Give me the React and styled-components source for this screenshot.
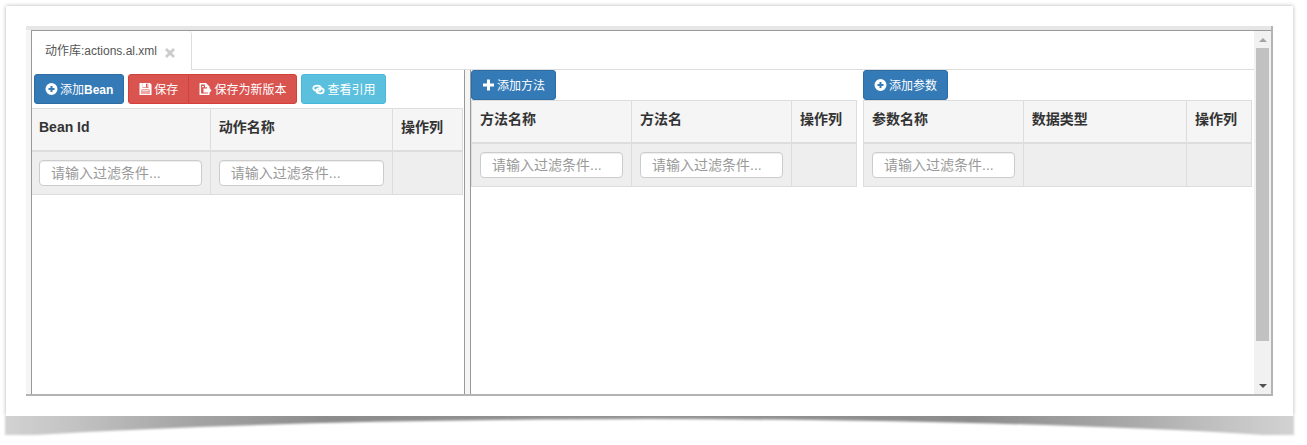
import React from 'react'
import styled, { createGlobalStyle } from 'styled-components'

const GlobalStyle = createGlobalStyle`
  *{
    box-sizing:border-box;
  }
  body{
    margin:0;
    background:#fff;
    color:#333;
    font-family:"Liberation Sans", Arial, "Noto Sans CJK SC", sans-serif;
    font-size:14px;
    line-height:20px;
  }
`
const Page = styled.div`
  display:flex;
  flex-direction:column;
  min-height:100vh;
  padding:6px 14px 5px 6px;
`
const Sheet = styled.main`
  flex:1;
  display:flex;
  padding:20px;
  background:#fff;
  box-shadow:0 0 4px rgba(0,0,0,0.3);
  clip-path:inset(-6px -6px 0 -6px);
`
const Curl = styled.svg`
  display:block;
  width:100%;
  height:24px;
  overflow:visible;
`
const Editor = styled.div`
  flex:1;
  display:flex;
  min-width:0;
  border:2px groove #ccc;
  border-color:#b4b4b4;
  border-style:solid;
  border-width:0 2px 2px 0;
  background:#f5f5f5;
  padding:4px 0 0 5px;
  box-shadow:inset 0 4px #e6e6e6;
`
const Workspace = styled.div`
  flex:1;
  display:flex;
  flex-direction:column;
  min-width:0;
  background:#fff;
  border:solid #999;
  border-width:1px 0 0 1px;
`
const Tabs = styled.div`
  display:flex;
  height:39px;
  border-bottom:1px solid #ddd;
`
const Tab = styled.div`
  display:flex;
  align-items:center;
  gap:8px;
  height:39px;
  padding:0 16px 0 13px;
  background:#fff;
  border-right:1px solid #ddd;
  border-radius:0 4px 0 0;
  color:#555;
  font-size:12px;
`
const TabLink = styled.a`
  color:#555;
  text-decoration:none;
`
const CloseButton = styled.button`
  display:flex;
  margin-top:4px;
  padding:0;
  border:none;
  background:none;
  color:#ccc;
`
const Panes = styled.div`
  flex:1;
  display:grid;
  grid-template-columns:432fr 7px 783fr;
`
const BeanPane = styled.section`
  padding:4px 1px 0 0;
`
const Splitter = styled.div`
  background:#f5f5f5;
  border:solid #999;
  border-width:0 1px;
`
const DetailPane = styled.div`
  display:grid;
  grid-template-columns:386fr 389fr;
  gap:6px;
  align-items:start;
  padding-right:2px;
`
const Toolbar = styled.div`
  display:flex;
  gap:4px;
  padding:${({ $inset }) => $inset ? '0 2px 4px' : '0'};
`
const ButtonGroup = styled.div`
  display:flex;
  button:first-child{
    border-radius:3px 0 0 3px;
  }
  button:last-child{
    border-radius:0 3px 3px 0;
    margin-left:-1px;
  }
`
const colors = {
  primary: ['#337ab7', '#2e6da4'],
  danger: ['#d9534f', '#d43f3a'],
  info: ['#5bc0de', '#46b8da'],
}
const Button = styled.button`
  display:flex;
  align-items:center;
  gap:2px;
  height:30px;
  padding:1px 10px 0;
  border:1px solid ${({ $kind }) => colors[$kind][1]};
  border-radius:3px;
  background:${({ $kind }) => colors[$kind][0]};
  color:#fff;
  font-family:inherit;
  font-size:12px;
  line-height:18px;
  white-space:nowrap;
  b{
    margin-left:-2px;
  }
`
const Icon = styled.svg`
  display:block;
  flex:none;
  width:13px;
  height:12px;
  margin-bottom:2px;
  fill:currentColor;
`
const Table = styled.table`
  width:100%;
  table-layout:fixed;
  border-collapse:separate;
  border-spacing:0;
  border-left:${({ $flush }) => $flush ? 'none' : '1px solid #ddd'};
  th, td{
    border-right:1px solid #ddd;
    text-align:left;
    vertical-align:top;
  }
  th{
    padding:8px 8px 13px;
    background:#f5f5f5;
    border-top:1px solid #ddd;
    border-bottom:2px solid #ddd;
    font-weight:bold;
  }
  td{
    height:43px;
    padding:8px;
    background:#eee;
    border-bottom:1px solid #ddd;
  }
  th:first-child, td:first-child{
    padding-left:${({ $flush }) => $flush ? '7px' : '8px'};
  }
`
const Filter = styled.input`
  display:block;
  width:100%;
  height:26px;
  padding:0 11px;
  border:1px solid #ccc;
  border-radius:4px;
  background:#fff;
  box-shadow:inset 0 1px 1px rgba(0,0,0,0.075);
  color:#555;
  font-family:inherit;
  font-size:14px;
  &::placeholder{
    color:#999;
    opacity:1;
  }
`
const Scrollbar = styled.div`
  display:flex;
  flex-direction:column;
  width:17px;
  padding:0 2px;
  background:#f1f1f1;
  border-top:1px solid #999;
`
const Arrow = styled.button`
  display:flex;
  align-items:center;
  justify-content:center;
  height:17px;
  padding:0;
  border:none;
  background:none;
  color:${({ $muted }) => $muted ? '#a3a3a3' : '#505050'};
`
const Track = styled.div`
  flex:1;
`
const Thumb = styled.div`
  height:89%;
  background:#c1c1c1;
`

const PlusSign = () => (
  <Icon viewBox="0 0 12 12" aria-hidden="true">
    <path fillRule="evenodd" d="M6 0a6 6 0 1 0 0 12A6 6 0 0 0 6 0zM5 3h2v2h2v2H7v2H5V7H3V5h2z" />
  </Icon>
)
const Plus = () => (
  <Icon viewBox="0 0 12 12" aria-hidden="true">
    <path d="M4.5.5h3v4h4v3h-4v4h-3v-4h-4v-3h4z" />
  </Icon>
)
const Floppy = () => (
  <Icon viewBox="0 0 12 12" aria-hidden="true">
    <path fillRule="evenodd" d="M0 0h10.5L12 1.5V12H0zM3 .8v4h6v-4zM2 6.5V11h8V6.5z" />
    <path d="M3 0h3.5v4.2H3zM8 1h1v3H8zM2.6 7.2h6.8v1.2H2.6zM2.6 9.4h6.8v1.2H2.6z" />
  </Icon>
)
const SaveAs = () => (
  <Icon viewBox="0 0 12 12" aria-hidden="true">
    <path fillRule="evenodd" d="M0 0h6.5L10 3.5V5l2 2.5-2 2.3V12H0zM1.6 1.4v9.2h6.8V9.4H4V5.6h3.6V4.2H5.4V1.4z" />
    <path d="M2.6 3h1.6v1.2H2.6zM4.8 6.4h3.4v2.2H4.8z" />
  </Icon>
)
const LinkIcon = () => (
  <Icon viewBox="0 0 12 12" aria-hidden="true">
    <g fill="none" stroke="currentColor" strokeWidth="1.8">
      <ellipse cx="4.6" cy="5.2" rx="3.8" ry="2.6" />
      <ellipse cx="7.6" cy="7.8" rx="3.6" ry="2.6" />
    </g>
  </Icon>
)

const FilterTable = ({ columns, flush }) => (
  <Table $flush={flush}>
    <colgroup>
      {columns.map(column => <col key={column.title} style={{ width: column.width }} />)}
    </colgroup>
    <thead>
      <tr>
        {columns.map(column => <th key={column.title} scope="col">{column.title}</th>)}
      </tr>
    </thead>
    <tbody>
      <tr>
        {columns.map(column => (
          <td key={column.title}>
            {column.filter && <Filter type="text" aria-label={column.title} placeholder="请输入过滤条件..." />}
          </td>
        ))}
      </tr>
    </tbody>
  </Table>
)

const beanColumns = [
  { title: 'Bean Id', filter: true, width: '41.5%' },
  { title: '动作名称', filter: true },
  { title: '操作列', width: '70px' },
]
const methodColumns = [
  { title: '方法名称', filter: true },
  { title: '方法名', filter: true },
  { title: '操作列', width: '65px' },
]
const paramColumns = [
  { title: '参数名称', filter: true, width: '41.2%' },
  { title: '数据类型' },
  { title: '操作列', width: '65px' },
]

const App = () => {
  return (
    <Page>
      <GlobalStyle />
      <Sheet>
        <Editor>
          <Workspace>
            <Tabs>
              <Tab>
                <TabLink href="#actions">动作库:actions.al.xml</TabLink>
                <CloseButton type="button" aria-label="关闭">
                  <svg width="10" height="10" viewBox="0 0 10 10" stroke="currentColor" strokeWidth="2.8">
                    <path d="M1 1l8 8M9 1l-8 8" />
                  </svg>
                </CloseButton>
              </Tab>
            </Tabs>
            <Panes>
              <BeanPane>
                <Toolbar $inset>
                  <Button type="button" $kind="primary"><PlusSign />添加<b>Bean</b></Button>
                  <ButtonGroup>
                    <Button type="button" $kind="danger"><Floppy />保存</Button>
                    <Button type="button" $kind="danger"><SaveAs />保存为新版本</Button>
                  </ButtonGroup>
                  <Button type="button" $kind="info"><LinkIcon />查看引用</Button>
                </Toolbar>
                <FilterTable columns={beanColumns} flush />
              </BeanPane>
              <Splitter />
              <DetailPane>
                <section>
                  <Toolbar>
                    <Button type="button" $kind="primary"><Plus />添加方法</Button>
                  </Toolbar>
                  <FilterTable columns={methodColumns} />
                </section>
                <section>
                  <Toolbar>
                    <Button type="button" $kind="primary"><PlusSign />添加参数</Button>
                  </Toolbar>
                  <FilterTable columns={paramColumns} />
                </section>
              </DetailPane>
            </Panes>
          </Workspace>
          <Scrollbar>
            <Arrow type="button" aria-label="向上滚动" $muted>
              <svg width="8" height="4" viewBox="0 0 8 4" fill="currentColor"><path d="M0 4l4-4 4 4z" /></svg>
            </Arrow>
            <Track><Thumb /></Track>
            <Arrow type="button" aria-label="向下滚动">
              <svg width="8" height="4" viewBox="0 0 8 4" fill="currentColor"><path d="M0 0l4 4 4-4z" /></svg>
            </Arrow>
          </Scrollbar>
        </Editor>
      </Sheet>
      <Curl viewBox="0 0 1287 24" preserveAspectRatio="none" aria-hidden="true">
        <defs>
          <linearGradient id="curl">
            <stop offset="0" stopColor="#d2d2d2" />
            <stop offset="0.05" stopColor="#c4c4c4" />
            <stop offset="0.13" stopColor="#a8a8a8" />
            <stop offset="0.25" stopColor="#8c8c8c" />
            <stop offset="0.5" stopColor="#949494" />
            <stop offset="0.75" stopColor="#8c8c8c" />
            <stop offset="0.87" stopColor="#a8a8a8" />
            <stop offset="0.95" stopColor="#c4c4c4" />
            <stop offset="1" stopColor="#d2d2d2" />
          </linearGradient>
          <filter id="soften" x="-1%" y="-30%" width="102%" height="160%">
            <feGaussianBlur stdDeviation="1.2" />
          </filter>
          <clipPath id="below">
            <rect x="-6" y="0" width="1300" height="30" />
          </clipPath>
        </defs>
        <g clipPath="url(#below)">
          <path filter="url(#soften)" fill="url(#curl)" d="M-1-6H1288V19H1258Q1017 4 644 3Q270 4 29 19H-1z" />
        </g>
      </Curl>
    </Page>
  )
}

export default App
